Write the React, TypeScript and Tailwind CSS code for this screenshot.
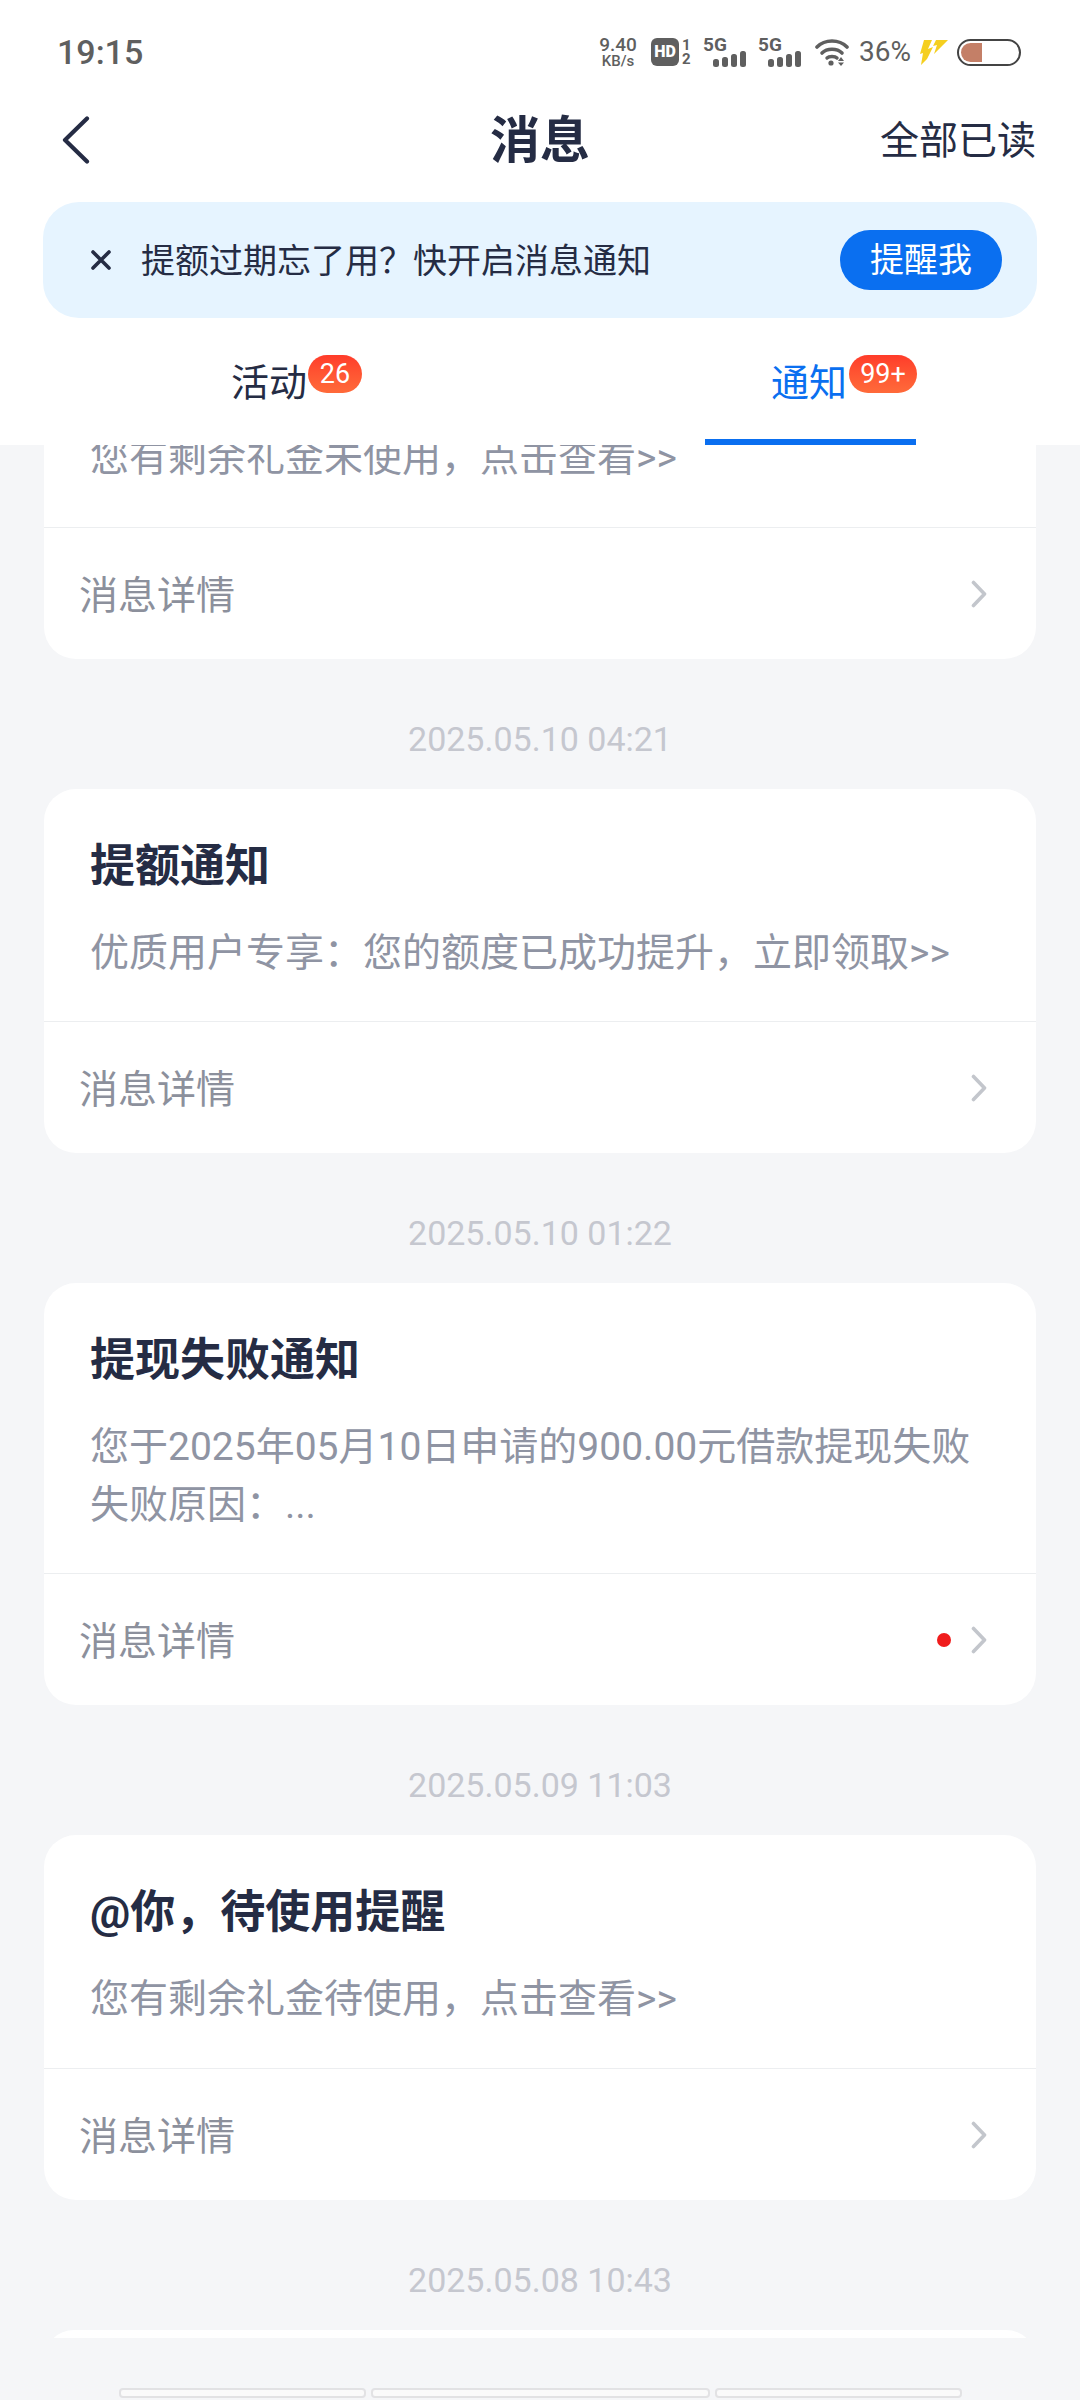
const cjk = "font-['Roboto','Noto_Sans_CJK_SC',sans-serif]";

const Chevron = () => (
  <svg width="16" height="28" viewBox="0 0 16 28" fill="none">
    <path d="M2.5 2.5 L13.5 14 L2.5 25.5" stroke="#c3c6cc" strokeWidth="3.6" strokeLinecap="round" strokeLinejoin="round" />
  </svg>
);

const Bars = () => (
  <svg width="34" height="16" viewBox="0 0 34 16" fill="#5f5f5f">
    <rect x="0" y="8" width="6" height="8" rx="2.5" />
    <rect x="9" y="6" width="6" height="10" rx="2.5" />
    <rect x="18" y="3" width="6" height="13" rx="2.5" />
    <rect x="27" y="0" width="6" height="16" rx="2.5" />
  </svg>
);

const Signal = () => (
  <div className="flex w-[44px] flex-col">
    <span className="text-[19px] font-bold leading-[15px] text-[#5f5f5f]">5G</span>
    <div className="ml-[10px] mt-[-1px]">
      <Bars />
    </div>
  </div>
);

const StatusBar = () => (
  <div className="flex h-[104px] items-center pl-[57px] pr-[59px] text-[#5f5f5f]">
    <span className="mt-[1px] text-[34px] font-medium">19:15</span>
    <div className="ml-auto flex items-center">
      <div className="flex w-[38px] flex-col items-center leading-none">
        <span className="text-[19px] font-medium leading-[19px]">9.40</span>
        <span className="text-[15px] font-medium leading-[15px]">KB/s</span>
      </div>
      <div className="ml-[14px] flex h-[28px] w-[28px] items-center justify-center rounded-[6px] bg-[#5f5f5f] text-[16px] font-black leading-none text-white">
        HD
      </div>
      <div className="ml-[3px] flex w-[12px] flex-col text-[15px] font-bold leading-[14px]">
        <span>1</span>
        <span>2</span>
      </div>
      <div className="ml-[9px]">
        <Signal />
      </div>
      <div className="ml-[11px]">
        <Signal />
      </div>
      <svg className="ml-[13px]" width="34" height="28" viewBox="0 0 34 28" fill="none">
        <path d="M2 9 C10 1 24 1 32 9" stroke="#5f5f5f" strokeWidth="3.6" strokeLinecap="round" />
        <path d="M7 15 C12 10 22 10 27 15" stroke="#5f5f5f" strokeWidth="3.6" strokeLinecap="round" />
        <path d="M12 20 C14 18 20 18 22 20" stroke="#5f5f5f" strokeWidth="3.4" strokeLinecap="round" />
        <circle cx="16" cy="25" r="2.6" fill="#5f5f5f" />
        <path d="M26 19 L29 23 H23 Z M23 24.5 H29 L26 28 Z" fill="#5f5f5f" />
      </svg>
      <span className="ml-[10px] text-[28px] leading-none">36%</span>
      <svg className="ml-[8px]" width="30" height="26" viewBox="0 0 30 26" fill="#f5cf1f">
        <path d="M5 1 H13 L9 10 L14 8 L8 20 L2 26 L4 14 L1 15 Z" />
        <path d="M17 1 H29 L15 15 L18 6 L14 7 Z" />
      </svg>
      <div className="ml-[8px] flex h-[27px] w-[64px] items-center rounded-full border-[2.5px] border-[#444444] p-[2px]">
        <div className="h-full w-[21px] rounded-l-full bg-[#c47f67]" />
      </div>
    </div>
  </div>
);

const Header = () => (
  <div className="relative z-10 bg-white">
    <StatusBar />
    <div className="relative flex h-[70px] items-center justify-between pl-[62px] pr-[44px] pt-[2px]">
      <svg width="28" height="48" viewBox="0 0 28 48" fill="none">
        <path d="M25 2.5 L3 24 L25 45.5" stroke="#252c44" strokeWidth="4.2" strokeLinecap="round" strokeLinejoin="round" />
      </svg>
      <span className="absolute inset-x-0 top-[2px] text-center text-[50px] font-bold leading-[70px] text-[#252c44]">消息</span>
      <span className="mt-[2px] text-[39px] leading-[70px] text-[#252c44]">全部已读</span>
    </div>
    <div className="mx-[43px] mt-[28px] flex h-[116px] items-center rounded-[36px] bg-[#e6f4ff] pl-[47px] pr-[35px]">
      <svg width="22" height="22" viewBox="0 0 22 22" fill="none">
        <path d="M3 3 L19 19 M19 3 L3 19" stroke="#252c44" strokeWidth="3.6" strokeLinecap="round" />
      </svg>
      <span className="ml-[29px] mt-[2px] text-[34px] leading-none text-[#252c44]">提额过期忘了用？快开启消息通知</span>
      <span className="ml-auto flex h-[60px] w-[162px] items-center justify-center rounded-full bg-[#0a6ff0] text-[34px] text-white">
        提醒我
      </span>
    </div>
    <div className="grid h-[127px] grid-cols-2">
      <div className="relative flex items-start justify-center">
        <div className="relative ml-[-2px] mt-[37px] text-[38px] leading-[56px] text-[#252c44]">
          活动
          <span className="absolute left-[77px] top-0 flex h-[38px] w-[54px] items-center justify-center rounded-[19px] bg-gradient-to-b from-[#ff3b2a] to-[#ff6a3a] text-[27px] leading-none text-white">
            26
          </span>
        </div>
      </div>
      <div className="relative flex items-start justify-center">
        <div className="relative ml-[-2px] mt-[37px] text-[38px] leading-[56px] text-[#0a6ff0]">
          通知
          <span className="absolute left-[78px] top-0 flex h-[38px] w-[68px] items-center justify-center rounded-[19px] bg-gradient-to-b from-[#ff3b2a] to-[#ff6a3a] text-[27px] leading-none text-white">
            99+
          </span>
        </div>
        <div className="absolute bottom-0 left-[165px] h-[6px] w-[211px] bg-[#0a6ff0]" />
      </div>
    </div>
  </div>
);

const DetailRow = ({ dot }: { dot?: boolean }) => (
  <div className="flex h-[132px] items-center border-t border-[#eceef0] pl-[35px] pr-[49px]">
    <span className="pt-[6px] text-[39px] text-[#8c909c]">消息详情</span>
    <div className="ml-auto flex items-center">
      {dot && <div className="mr-[20px] h-[14px] w-[14px] rounded-full bg-[#f01c1c]" />}
      <Chevron />
    </div>
  </div>
);

const Card = ({ title, lines, dot, tall }: { title: string; lines: string[]; dot?: boolean; tall?: boolean }) => (
  <div className="mx-[44px] rounded-[32px] bg-white">
    <div className={tall ? "pb-[40px] pl-[46px] pr-[30px] pt-[48px]" : "pb-[39px] pl-[46px] pr-[30px] pt-[48px]"}>
      <div className="text-[45px] font-bold leading-[60px] text-[#252c44]">{title}</div>
      <div className="mt-[27px] text-[39px] leading-[58px] text-[#8f94a3]">
        {lines.map((line) => (
          <div key={line} className="whitespace-nowrap">
            {line}
          </div>
        ))}
      </div>
    </div>
    <DetailRow dot={dot} />
  </div>
);

const Stamp = ({ children }: { children: string }) => (
  <div className="flex h-[130px] items-start justify-center pt-[58px] text-[34px] leading-[44px] text-[#c5c7cf]">
    {children}
  </div>
);

export default function App() {
  return (
    <div className={`flex h-[2400px] w-[1080px] flex-col overflow-hidden bg-[#f5f6f8] ${cjk}`}>
      <Header />
      <div className="flex-1 overflow-hidden">
        {/* first card is scrolled under the header */}
        <div className="mx-[44px] rounded-b-[32px] bg-white">
          <div className="h-[82px] overflow-hidden pl-[46px]">
            <div className="mt-[-16px] text-[39px] leading-[58px] text-[#8f94a3]">您有剩余礼金未使用，点击查看&gt;&gt;</div>
          </div>
          <DetailRow />
        </div>
        <Stamp>2025.05.10 04:21</Stamp>
        <Card title="提额通知" lines={["优质用户专享：您的额度已成功提升，立即领取>>"]} />
        <Stamp>2025.05.10 01:22</Stamp>
        <Card title="提现失败通知" lines={["您于2025年05月10日申请的900.00元借款提现失败", "失败原因：..."]} dot />
        <Stamp>2025.05.09 11:03</Stamp>
        <Card title="@你，待使用提醒" lines={["您有剩余礼金待使用，点击查看>>"]} tall />
        <Stamp>2025.05.08 10:43</Stamp>
        <div className="h-[8px] overflow-hidden">
          <div className="mx-[44px] h-[60px] rounded-[32px] bg-white" />
        </div>
      </div>
      <div className="flex h-[12px] justify-center gap-[5px] pb-[2px]">
        <div className="h-[10px] w-[247px] rounded-[4px] border-2 border-[#e2e2e4] bg-[#fafafa]" />
        <div className="h-[10px] w-[339px] rounded-[4px] border-2 border-[#e2e2e4] bg-[#fafafa]" />
        <div className="h-[10px] w-[247px] rounded-[4px] border-2 border-[#e2e2e4] bg-[#fafafa]" />
      </div>
    </div>
  );
}
